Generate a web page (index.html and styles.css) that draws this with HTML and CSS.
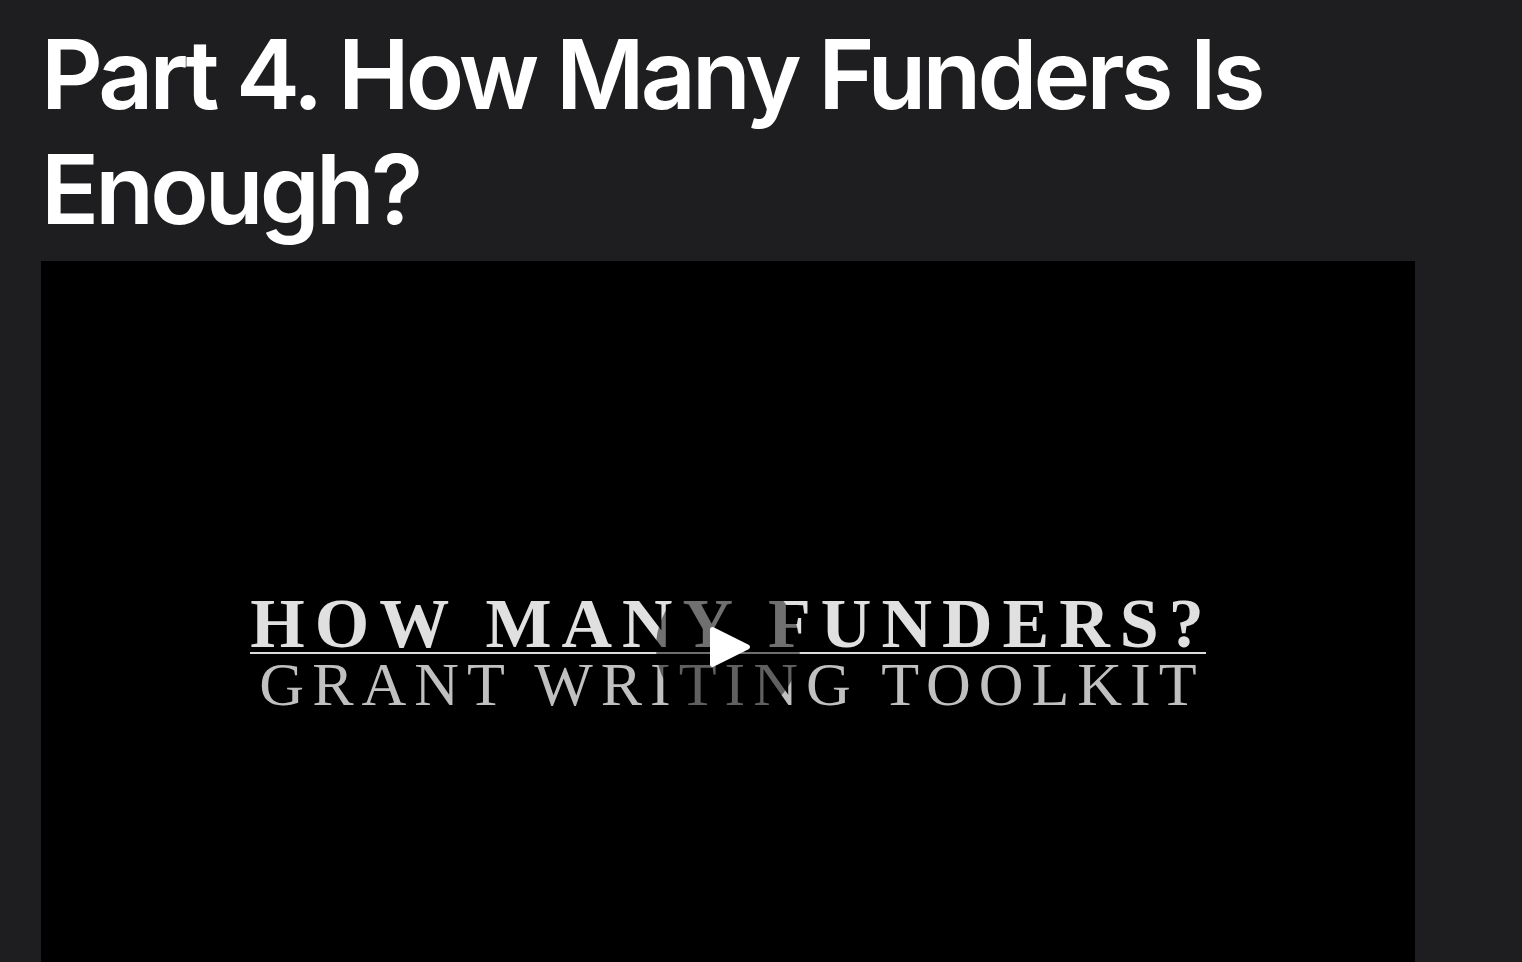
FILE: index.html
```html
<!DOCTYPE html>
<html lang="en">
<head>
<meta charset="utf-8">
<meta name="viewport" content="width=device-width, initial-scale=1">
<title>Part 4. How Many Funders Is Enough?</title>
<link rel="stylesheet" href="styles.css">
</head>
<body>
<main class="lesson">
  <h1 class="lesson-title">Part 4. How Many Funders Is Enough?</h1>
  <section class="video" aria-label="Lesson video">
    <div class="title-card">
      <p class="card-heading"><span class="card-text">HOW MANY FUNDERS?</span></p>
      <p class="card-subheading"><span class="card-text">GRANT WRITING TOOLKIT</span></p>
    </div>
    <button class="play" type="button" aria-label="Play video">
      <svg class="play-icon" viewBox="0 0 40 40" aria-hidden="true"><path d="M0 2.5C0 .6 1.8-.5 3.5.3L38.6 17.8C40.5 18.7 40.5 21.3 38.6 22.2L3.5 39.7C1.8 40.5 0 39.4 0 37.5Z"/></svg>
    </button>
  </section>
</main>
</body>
</html>
```

FILE: styles.css
```css
body {
  margin: 0;
  background: #1e1e20;
  color: #fff;
  font-family: Inter, "Liberation Sans", sans-serif;
}

.lesson {
  padding: 17px 107px 40px 41px;
}

.lesson-title {
  margin: 0 0 14px;
  font-size: 96px;
  font-weight: 600;
  line-height: 115px;
  letter-spacing: -0.04em;
}

.video {
  display: grid;
  place-items: center;
  aspect-ratio: 16 / 9;
  overflow: hidden;
  background: #000;
}

.title-card,
.play {
  grid-area: 1 / 1;
}

.title-card {
  padding-top: 12px;
  font-family: "Liberation Serif", serif;
  text-align: center;
  white-space: nowrap;
}

.card-heading,
.card-subheading {
  margin: 0;
}

.card-heading {
  padding-top: 4px;
  border-bottom: 2px solid #dcdedb;
  color: #e0e0e0;
  font-size: 70px;
  font-weight: 700;
  line-height: 56px;
  letter-spacing: 10px;
}

.card-subheading {
  color: #c0c0c0;
  font-size: 62px;
  line-height: 60px;
  letter-spacing: 8px;
}

/* Cancels the tracking after the last letter so the lines centre on their ink. */
.card-text {
  margin-right: -8px;
}

.play {
  display: grid;
  place-items: center;
  width: 144px;
  height: 144px;
  padding: 0 0 0 4px;
  border: 0;
  border-radius: 50%;
  background: rgba(0, 0, 0, 0.5);
  cursor: pointer;
}

.play-icon {
  width: 40px;
  height: 40px;
  fill: #fff;
}
```
